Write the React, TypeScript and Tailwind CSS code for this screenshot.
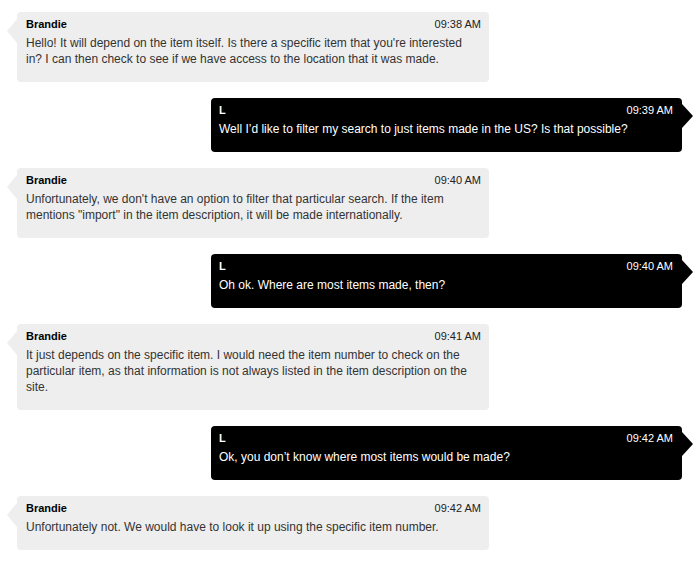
import React from 'react';

interface Message {
  from: 'agent' | 'user';
  name: string;
  time: string;
  text: string;
}

const messages: Message[] = [
  {
    from: 'agent',
    name: 'Brandie',
    time: '09:38 AM',
    text: "Hello! It will depend on the item itself. Is there a specific item that you're interested in? I can then check to see if we have access to the location that it was made.",
  },
  {
    from: 'user',
    name: 'L',
    time: '09:39 AM',
    text: 'Well I\u2019d like to filter my search to just items made in the US? Is that possible?',
  },
  {
    from: 'agent',
    name: 'Brandie',
    time: '09:40 AM',
    text: 'Unfortunately, we don\'t have an option to filter that particular search. If the item mentions "import" in the item description, it will be made internationally.',
  },
  {
    from: 'user',
    name: 'L',
    time: '09:40 AM',
    text: 'Oh ok. Where are most items made, then?',
  },
  {
    from: 'agent',
    name: 'Brandie',
    time: '09:41 AM',
    text: 'It just depends on the specific item. I would need the item number to check on the particular item, as that information is not always listed in the item description on the site.',
  },
  {
    from: 'user',
    name: 'L',
    time: '09:42 AM',
    text: 'Ok, you don\u2019t know where most items would be made?',
  },
  {
    from: 'agent',
    name: 'Brandie',
    time: '09:42 AM',
    text: 'Unfortunately not. We would have to look it up using the specific item number.',
  },
];

const Bubble: React.FC<{ msg: Message }> = ({ msg }) => {
  const isAgent = msg.from === 'agent';
  return (
    <div
      className={
        isAgent
          ? 'relative ml-[17px] w-[472px] rounded-[4px] bg-[#eeeeee] pl-[9px] pr-[8px] pt-[5px] pb-[15px] text-[#333333]'
          : 'relative ml-[211px] w-[471px] rounded-[4px] bg-black pl-[8px] pr-[9px] pt-[5px] pb-[15px] text-white'
      }
    >
      {isAgent ? (
        <span className="absolute -left-[10px] top-[7px] h-0 w-0 border-y-[12px] border-r-[10px] border-y-transparent border-r-[#eeeeee]" />
      ) : (
        <span className="absolute -right-[11px] top-[6px] h-0 w-0 border-y-[12px] border-l-[11px] border-y-transparent border-l-black" />
      )}
      <div className="flex h-[14px] items-center justify-between text-[11px] leading-[14px]">
        <span className={isAgent ? 'font-bold text-black' : 'font-bold text-white'}>{msg.name}</span>
        <span className={isAgent ? 'text-[#222222]' : 'text-white'}>{msg.time}</span>
      </div>
      <p className="mt-[4px] text-[12px] leading-[16px]">{msg.text}</p>
    </div>
  );
};

export default function App() {
  return (
    <div className="min-h-screen w-[700px] bg-white pt-[12px] font-['Liberation_Sans',Arial,sans-serif]">
      <div className="flex flex-col gap-[16px]">
        {messages.map((m, i) => (
          <Bubble key={i} msg={m} />
        ))}
      </div>
    </div>
  );
}
